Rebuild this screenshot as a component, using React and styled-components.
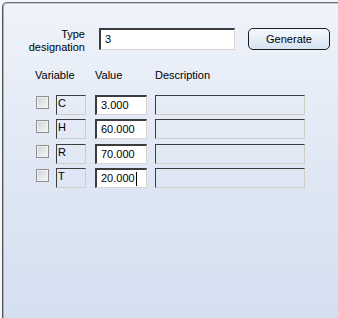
import React from "react";
import styled, { createGlobalStyle } from "styled-components";

const GlobalStyle = createGlobalStyle`
  html, body {
    margin: 0;
    padding: 0;
    background: #f4f6fa;
  }
  body {
    font-family: "Liberation Sans", Arial, sans-serif;
    font-size: 11px;
    color: #000;
  }
`;

const Panel = styled.div`
  box-sizing: border-box;
  margin: 2px 0 0 2px;
  height: 316px;
  border-top: 1px solid #6e6e72;
  border-left: 1px solid #55555c;
  border-top-left-radius: 5px;
  box-shadow: inset 1px 0 0 #a8b0bf, inset 0 1px 0 #c4cad6;
  background: linear-gradient(to bottom, #eff3fa 0%, #dfe7f4 55%, #d4dff0 100%);
  padding: 25px 0 0 0;
`;

const TopRow = styled.div`
  display: flex;
  align-items: flex-start;
`;

const FieldLabel = styled.div`
  width: 82px;
  text-align: right;
  line-height: 13px;
  margin-right: 14px;
`;

const TextInput = styled.div`
  box-sizing: border-box;
  width: ${(p) => p.$w}px;
  height: ${(p) => p.$h}px;
  background: #fff;
  border-top: 2px solid #3c3c40;
  border-left: 2px solid #3c3c40;
  border-bottom: 1px solid #d6d4cc;
  border-right: 1px solid #d6d4cc;
  display: flex;
  align-items: center;
  padding-left: ${(p) => p.$pad}px;
  line-height: 13px;
`;

const Button = styled.div`
  box-sizing: border-box;
  margin-left: 13px;
  width: 82px;
  height: 22px;
  border: 1px solid #1c1c1c;
  border-radius: 5px;
  background: linear-gradient(to bottom, #f6f9fd 0%, #e6eef8 50%, #d6e2f1 100%);
  display: flex;
  align-items: center;
  justify-content: center;
`;

const Grid = styled.div`
  display: grid;
  grid-template-columns: 21px 39px 60px 150px;
  padding-left: 32px;
  margin-top: 15px;
`;

const HeadCell = styled.div`
  line-height: 13px;
  height: 13px;
  grid-column: ${(p) => p.$span || "auto"};
  margin-bottom: 13px;
`;

const CheckBox = styled.div`
  box-sizing: border-box;
  width: 13px;
  height: 13px;
  margin: 1px 0 0 1px;
  border: 1px solid #8f9093;
  background: linear-gradient(135deg, #cfd0d2 0%, #e4e5e6 50%, #f8f8f8 100%);
  box-shadow: inset 0 0 0 1px #f2f2f2;
`;

const VarBox = styled.div`
  box-sizing: border-box;
  width: 30px;
  height: 20px;
  border-top: 1px solid #3c3c40;
  border-left: 1px solid #3c3c40;
  border-bottom: 1px solid #cfcdc6;
  border-right: 1px solid #cfcdc6;
  padding: 1px 0 0 1px;
  line-height: 13px;
`;

const DescBox = styled.div`
  box-sizing: border-box;
  width: 150px;
  height: 20px;
  border-top: 1px solid #3c3c40;
  border-left: 1px solid #3c3c40;
  border-bottom: 1px solid #cfcdc6;
  border-right: 1px solid #cfcdc6;
`;

const Row = styled.div`
  display: contents;
`;

const Spacer = styled.div`
  grid-column: 1 / -1;
  height: ${(p) => p.$h}px;
`;

const Caret = styled.span`
  display: inline-block;
  width: 1px;
  height: 14px;
  background: #000;
  margin-left: 1px;
`;

const rows = [
  { name: "C", value: "3.000" },
  { name: "H", value: "60.000" },
  { name: "R", value: "70.000" },
  { name: "T", value: "20.000", caret: true },
];

const gaps = [4, 5, 4];

export default function App() {
  return (
    <>
      <GlobalStyle />
      <Panel>
        <TopRow>
          <FieldLabel>
            Type
            <br />
            designation
          </FieldLabel>
          <TextInput $w={136} $h={22} $pad={4}>
            3
          </TextInput>
          <Button>Generate</Button>
        </TopRow>
        <Grid>
          <HeadCell $span="1 / 3">Variable</HeadCell>
          <HeadCell>Value</HeadCell>
          <HeadCell>Description</HeadCell>
          {rows.map((r, i) => (
            <React.Fragment key={r.name}>
              <Row>
                <CheckBox />
                <VarBox>{r.name}</VarBox>
                <TextInput $w={52} $h={20} $pad={4}>
                  {r.value}
                  {r.caret && <Caret />}
                </TextInput>
                <DescBox />
              </Row>
              {i < rows.length - 1 && <Spacer $h={gaps[i]} />}
            </React.Fragment>
          ))}
        </Grid>
      </Panel>
    </>
  );
}
